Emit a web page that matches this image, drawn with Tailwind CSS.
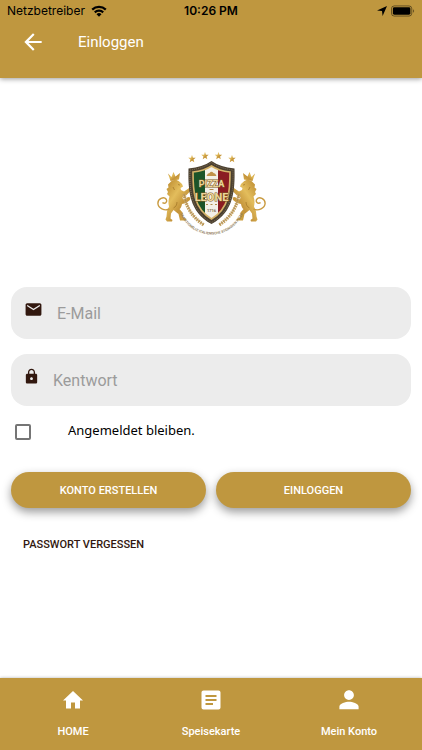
<!DOCTYPE html>
<html lang="de">
  <head>
    <meta charset="UTF-8" />
    <meta name="viewport" content="width=device-width, initial-scale=1" />
    <title>Einloggen</title>
    <script src="https://cdn.jsdelivr.net/npm/@tailwindcss/browser@4"></script>
  </head>
  <body class="flex min-h-screen flex-col bg-white font-['Roboto',sans-serif]">
    <header class="bg-[#bf973f] pb-4 shadow-[0_1px_5px_rgba(0,0,0,0.4)]">
      <!-- Status bar -->
      <div class="grid h-[22px] grid-cols-3 items-center px-[7px] font-['Inter',sans-serif] text-[12px] text-black">
        <div class="flex items-center gap-1.5">
          <span>Netzbetreiber</span>
          <svg class="h-3 w-4" viewBox="0 0 16 12" fill="none" stroke="#000" stroke-width="2.200">
            <path d="M1.200 4.600a9.800 9.800 0 0 1 13.600 0" />
            <path d="M3.800 7.400a6 6 0 0 1 8.400 0" />
            <path d="M8 11.800 5.500 9.300a3.600 3.600 0 0 1 5 0z" fill="#000" stroke="none" />
          </svg>
        </div>
        <span class="text-center font-semibold">10:26 PM</span>
        <div class="flex items-center justify-end gap-1">
          <svg class="h-[10px] w-[10px]" viewBox="0 0 10 10"><path d="M10 0 5.600 10 5 5 0 4.400z" /></svg>
          <svg class="h-3 w-6" viewBox="0 0 26 12">
            <rect x="0.5" y="0.5" width="22" height="11" rx="3" fill="none" stroke="#000" stroke-opacity="0.5" />
            <rect x="2" y="2" width="19" height="8" rx="1.600" />
            <path d="M24 4.200v3.600c1.400-.6 1.400-3 0-3.600z" fill-opacity="0.5" />
          </svg>
        </div>
      </div>
      <div class="flex h-10 items-center gap-8 px-5 text-white">
        <button type="button" aria-label="Zurück">
          <svg class="h-[26px] w-[26px]" viewBox="0 0 24 24" fill="currentColor">
            <path d="M20 11H7.830l5.590-5.590L12 4l-8 8 8 8 1.410-1.410L7.830 13H20v-2z" />
          </svg>
        </button>
        <h1 class="text-[15px]">Einloggen</h1>
      </div>
    </header>

    <main class="flex flex-col px-[11px]">
      <svg class="mx-auto mt-[66px] h-24 w-[121px]" viewBox="0 0 121 96" role="img" aria-label="Pizza Leone">
        <defs>
          <linearGradient id="gold" x1="0" y1="0" x2="1" y2="1">
            <stop offset="0" stop-color="#b8862c" />
            <stop offset="0.35" stop-color="#e3bd5c" />
            <stop offset="0.6" stop-color="#c4943a" />
            <stop offset="1" stop-color="#dcb04a" />
          </linearGradient>
          <clipPath id="shield">
            <path d="M60.500 22Q53 27 42 28C42 45 42 64 60.500 75C79 64 79 45 79 28Q68 27 60.500 22z" />
          </clipPath>
          <path id="star" d="M0-3.900 1-1.300 3.700-1.200 1.600.5 2.300 3.200 0 1.700-2.300 3.200-1.600.5-3.700-1.200-1-1.300z" />
          <g id="lion">
            <path d="M17 29.500l3.500 3.500 2-5 2 4.500 4.500-3.500-1 6.500-8.500 1.500z" />
            <path d="M20 37.500c2.500-2 6.500-2 8.500.2l2.500 2.300 1 2.500-2.500 1.500.5 2 3 1.500 4.500-3 1.500-2 3.500 1-.5 2.500-3 1.500-4 4-3.500 1.500.5 2.500 3-1 2-1.500 2.500.5-.5 2.500-4 3-4 1c-.5 2.500-1 4-2.500 5l3 3.500.5 5 3.500 1.500-.5 1.500h-6l-1.500-6.500-5-4-2.500 3.500-.5 5 2 1.500-.5 1.500H16l-1.500-2 1-3 .5-5 2-5c-1-4-.5-7 .5-10l-2.500-2.500 1-2-1.500-3 2-1.500-.5-3z" />
            <path d="M18.500 65c-5 2.500-11.300-1-11.600-5.500-.2-4.500 5.800-7.500 8.300-4.300 1.600 2.600-.8 5-3.800 3.500" fill="none" stroke="#c99b40" stroke-width="1.400" />
            <path d="M27 40.500l2 .6M22 43l1.500 3M26 58c0 3-1.500 5-3.500 6" fill="none" stroke="#96691f" stroke-width="0.600" />
            <path d="M33 50Q36 70 53 81" fill="none" stroke="#c7a562" stroke-width="3.400" stroke-dasharray="1.600 0.800" />
            <path d="M33 50Q36 70 53 81" fill="none" stroke="#a8824a" stroke-width="0.700" />
          </g>
        </defs>
        <g fill="url(#gold)">
          <use href="#star" x="41" y="15" />
          <use href="#star" x="54" y="12" />
          <use href="#star" x="67.500" y="12" />
          <use href="#star" x="81" y="15" />
          <use href="#lion" />
          <use href="#lion" transform="matrix(-1 0 0 1 121 0)" />
        </g>
        <path d="M60.500 17Q52 23 37.500 24.500C37 46 38 68 60.500 80C83 68 84 46 83.500 24.500Q69 23 60.500 17z" fill="#4b4030" />
        <path d="M60.500 18.500Q52 24.500 39 26C38.500 46 39.500 67 60.500 78.500C81.500 67 82.500 46 82 26Q69 24.500 60.500 18.500z" fill="none" stroke="#8d7d61" stroke-width="0.800" stroke-dasharray="1 1" />
        <g clip-path="url(#shield)">
          <path d="M40 18h14v60H40z" fill="#1c5429" />
          <path d="M54 18h13v60H54z" fill="#f3f0e8" />
          <path d="M67 18h14v60H67z" fill="#8b1c22" />
        </g>
        <path d="M60.500 22Q53 27 42 28C42 45 42 64 60.500 75C79 64 79 45 79 28Q68 27 60.500 22z" fill="none" stroke="#d6b46a" stroke-width="1.600" />
        <path d="M55.500 32q1-3 3-3 2-2.500 4 0 2 0 3 3z" fill="#c1924a" />
        <path d="M58.500 45.500h4M55 60.500h2M59.500 60.500h2M64 60.500h2" stroke="#b08a4c" stroke-width="1.200" />
        <g text-anchor="middle" class="font-['Liberation_Sans_Narrow','Roboto',sans-serif] font-bold" fill="#ecd59a" stroke="#7d5a25" stroke-width="1" paint-order="stroke">
          <text x="60.500" y="43" font-size="9">PIZZA</text>
          <text x="60.500" y="56.500" font-size="11">LEONE</text>
          <text x="60.500" y="68" font-size="4" fill="#7d6a48" stroke="none">1716</text>
        </g>
        <path id="motto" d="M28.500 68A34 34 0 0 0 92.500 68" fill="none" />
        <text class="font-['Liberation_Sans_Narrow','Roboto',sans-serif] font-bold" font-size="3.500" fill="#8f7c58">
          <textPath href="#motto" startOffset="50%" text-anchor="middle">TRADITIONELLE ITALIENISCHE STEINOFEN PIZZA</textPath>
        </text>
      </svg>

      <form class="mt-[47px]">
        <div class="flex flex-col gap-[15px] text-[16px]">
          <div class="flex h-[52px] items-center rounded-2xl bg-[#ececec] pr-4 pl-[13px]">
            <label for="email" class="pb-2" aria-label="E-Mail">
              <svg class="h-[19px] w-[19px]" viewBox="0 0 24 24" fill="#32180f">
                <path d="M20 4H4c-1.100 0-1.990.9-1.990 2L2 18c0 1.100.9 2 2 2h16c1.100 0 2-.9 2-2V6c0-1.100-.9-2-2-2zm0 4l-8 5-8-5V6l8 5 8-5v2z" />
              </svg>
            </label>
            <input id="email" type="email" placeholder="E-Mail" class="ml-[14px] min-w-0 flex-1 pt-0.5 outline-none placeholder:text-[#9b9b9b]" />
          </div>
          <div class="flex h-[52px] items-center rounded-2xl bg-[#ececec] pr-4 pl-3">
            <label for="password" class="pb-2" aria-label="Kentwort">
              <svg class="h-[17px] w-[17px]" viewBox="0 0 24 24" fill="#32180f">
                <path d="M18 8h-1V6c0-2.760-2.240-5-5-5S7 3.240 7 6v2H6c-1.100 0-2 .9-2 2v10c0 1.100.9 2 2 2h12c1.100 0 2-.9 2-2V10c0-1.100-.9-2-2-2zm-6 9c-1.100 0-2-.9-2-2s.9-2 2-2 2 .9 2 2-.9 2-2 2zm3.100-9H8.900V6c0-1.710 1.390-3.100 3.100-3.100 1.710 0 3.100 1.390 3.100 3.100v2z" />
              </svg>
            </label>
            <input id="password" type="password" placeholder="Kentwort" class="ml-[13px] min-w-0 flex-1 pt-0.5 outline-none placeholder:text-[#9b9b9b]" />
          </div>
        </div>

        <div class="mt-[14px] flex items-start pl-1">
          <input id="remember" type="checkbox" class="mt-1 h-4 w-4 appearance-none rounded-[2px] border-2 border-[#757575] checked:bg-[#bf973f]" />
          <label for="remember" class="ml-[37px] font-['Noto_Sans',sans-serif] text-[13px] leading-5 text-black">Angemeldet bleiben.</label>
        </div>

        <div class="mt-8 grid grid-cols-2 gap-[10px] text-[11px] font-medium text-white">
          <button type="button" class="h-9 rounded-full bg-[#bf973f] pt-0.5 shadow-[0_4px_10px_rgba(0,0,0,0.4)]">KONTO ERSTELLEN</button>
          <button type="submit" class="h-9 rounded-full bg-[#bf973f] pt-0.5 shadow-[0_4px_10px_rgba(0,0,0,0.4)]">EINLOGGEN</button>
        </div>
        <button type="button" class="mt-[18px] h-9 px-3 pt-0.5 text-[11px] font-medium text-[#32180f]">PASSWORT VERGESSEN</button>
      </form>
    </main>

    <nav class="mt-auto grid h-[72px] grid-cols-3 bg-[#bf973f] px-1 pt-[10px] text-[11px] font-medium text-white shadow-[0_0_3px_rgba(0,0,0,0.3)]">
      <a href="#" class="flex flex-col items-center gap-3">
        <svg class="h-6 w-6" viewBox="0 0 24 24" fill="currentColor"><path d="M10 20.500v-6h4v6h5v-8h3L12 3 2 12.500h3v8z" /></svg>
        HOME
      </a>
      <a href="#" class="flex flex-col items-center gap-3">
        <svg class="h-6 w-6" viewBox="0 0 24 24" fill="currentColor">
          <path d="M19.500 2.500h-15c-1.100 0-2 .9-2 2v15c0 1.100.9 2 2 2h15c1.100 0 2-.9 2-2v-15c0-1.100-.9-2-2-2zM14 17H6.500v-2H14v2zm3.500-4h-11v-2h11v2zm0-4h-11V7h11v2z" />
        </svg>
        Speisekarte
      </a>
      <a href="#" class="flex flex-col items-center gap-3">
        <svg class="h-6 w-6" viewBox="0 0 24 24" fill="currentColor">
          <path d="M12 12c2.700 0 4.900-2.200 4.900-4.900S14.700 2.200 12 2.200 7.100 4.400 7.100 7.100 9.300 12 12 12zm0 1.800c-3.200 0-9.600 1.600-9.600 4.800v2.600h19.200v-2.600c0-3.200-6.400-4.800-9.600-4.800z" />
        </svg>
        Mein Konto
      </a>
    </nav>
  </body>
</html>
